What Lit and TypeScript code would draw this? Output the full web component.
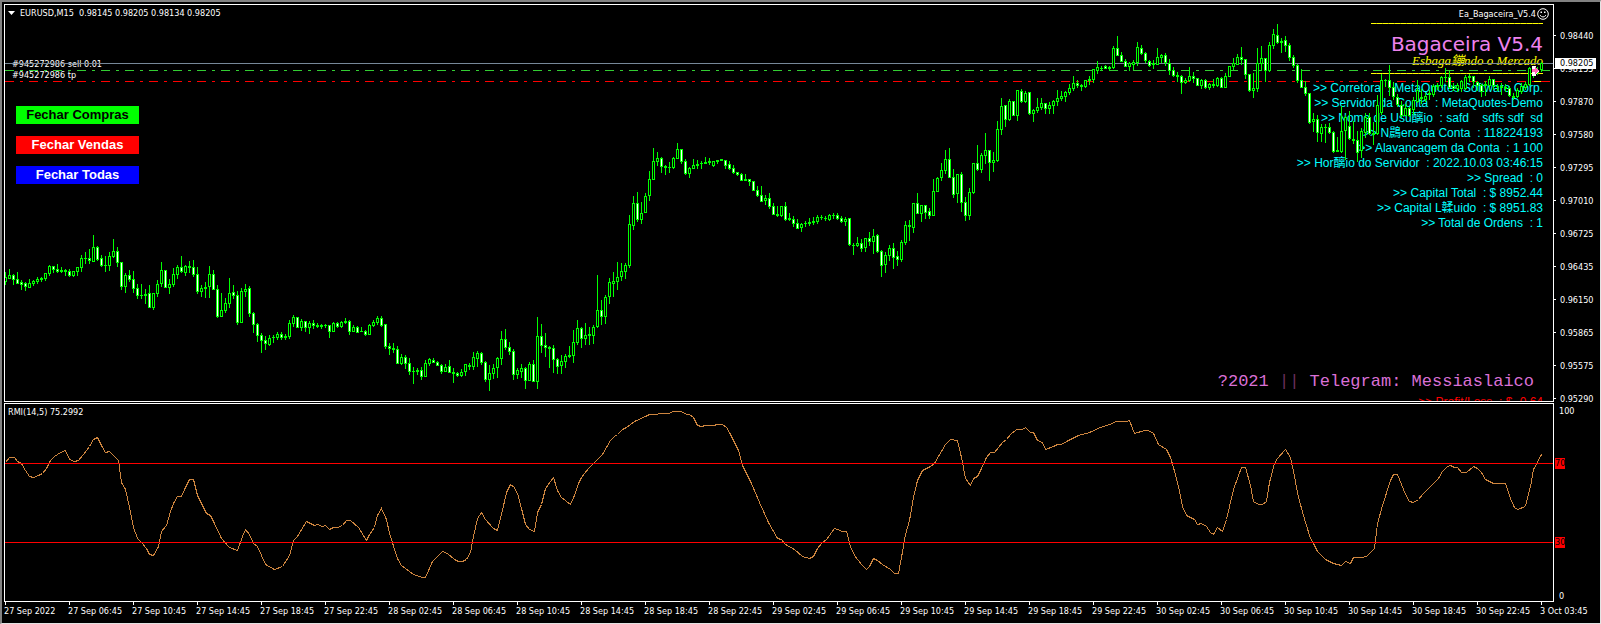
import { LitElement, html, svg, css } from "lit";
import { customElement } from "lit/decorators.js";

/**
 * Bars are listed as high, body top, body bottom, low, measured downwards from
 * the base row of their group in thirds of a row. "+" closes up, "-" closes down.
 */
interface BarGroup {
  base: number;
  bars: string;
}

const STEP = 4;
const FIRST_X = 5;

const GROUPS: BarGroup[] = [
  {
    base: 220,
    bars: `+156,171,186,195 +147,165,177,177 -162,165,180,195 -156,177,192,192 -180,186,195,210 -186,189,201,213
+177,189,203,203 +180,183,192,198 +171,177,186,192 +171,174,180,186 +159,159,177,183 +135,138,162,168
-138,138,150,159 -132,147,156,159 -141,150,156,159 +147,150,156,168 -147,153,168,171 +153,153,168,171
+141,141,156,168 +105,114,144,156 +96,114,117,132 -87,114,123,132 +45,81,126,126 -78,81,120,123
-105,114,138,141 +108,135,138,156 +96,108,138,153 +57,93,111,114 -81,93,129,141 -126,126,201,210
+159,165,201,219 -150,165,180,186 -153,177,207,219 -192,204,228,237 +192,225,228,237 +207,222,228,252
-195,219,264,264 +219,219,264,270 +180,192,222,231 +126,150,192,201 -150,150,204,204 +177,192,204,222
+144,162,195,201 +135,141,165,177 -108,141,156,159 +135,138,159,168 -123,138,144,159 -120,141,165,171
-141,162,216,222 +195,204,216,231 +186,201,207,234 +138,162,201,234 -150,162,210,210 -195,207,291,294
+219,270,291,291 +234,249,273,279 +174,219,252,264 -195,216,228,237 -213,225,309,315 +204,213,309,309
+192,207,216,231 -198,204,282,291 -276,279,315,339 -309,312,348,366 -339,345,363,399 -348,360,372,390
+345,354,375,378 +345,351,354,369 +336,342,354,360 -336,342,354,360 -342,348,354,360 +300,309,351,357
+285,291,312,321 -291,291,324,324 +297,303,324,333 -303,303,324,336 +303,309,324,342 -300,309,318,327
-309,315,321,324 +312,315,321,327 +312,315,318,324 -315,315,336,354 +306,309,336,336 -306,309,321,324
+303,306,321,324 +294,303,309,312 -300,303,336,345 +315,321,336,336 -318,321,339,339 +321,333,336,336
-330,333,345,348 +312,315,345,345 +300,306,318,321 +288,294,309,315 -288,294,318,321 -312,312,381,387
-369,378,387,405 -369,384,390,399`,
  },
  {
    base: 260,
    bars: `-258,267,312,312 +282,291,312,315 -285,291,312,327 -294,309,336,345 +321,333,336,372 +324,330,336,345
-321,330,351,360 +300,309,351,351 +294,297,312,318 -294,300,309,309 -303,306,318,318 -312,315,336,342
+312,321,336,336 -300,318,339,339 -324,336,342,369 -336,339,348,351 +327,336,348,351 +312,312,336,348
-309,315,321,330 +276,291,321,330 +273,279,297,321 -276,279,309,315 -303,306,360,366 +315,339,360,393
+312,324,342,357 +291,294,324,354 +213,237,297,315 -207,237,264,270 -246,261,276,285 -267,273,345,360
+324,330,345,357 +312,324,336,354 -321,324,363,387 +306,312,363,363 -300,312,366,366 +171,228,366,387
-192,228,258,279 -219,255,264,291 -258,261,267,324 -255,264,300,339 -294,297,321,342 +285,303,318,342
+282,288,306,324 -258,285,291,294 +210,246,288,309 +180,204,249,255 -201,204,237,264 +189,225,237,255
-201,222,228,255 +195,201,228,252 +45,150,201,204 -120,150,171,195 +105,111,171,192 +54,66,111,132
+36,63,72,111 +6,51,66,90 +9,33,51,63 +9,15,36,57`,
  },
  {
    base: 130,
    bars: `+255,282,408,414 +198,219,288,300 -186,219,270,276 +216,249,270,282 +189,198,249,249 +123,147,198,213
+54,93,150,150 +66,84,96,108 -81,84,111,129 -105,108,114,135 +96,111,114,129 +81,84,114,117
+39,57,87,87 -57,57,96,102 -87,93,132,135 +111,114,132,144 +87,105,117,117 -90,102,108,117
+93,99,102,117 -81,96,102,102 -84,93,99,105 +93,93,108,111 -90,90,96,102 -87,87,93,93
-90,90,108,117 -93,102,117,120 -105,114,129,132 -126,126,135,138 -129,132,153,153 -132,147,153,153
-147,147,156,168 -153,153,183,183 -168,180,198,201 -168,195,216,216 +195,204,213,225 -189,204,231,237
-219,228,255,255 -228,252,258,261 +228,228,258,261 -216,228,270,273 -249,264,270,273 -258,267,282,291
-267,279,297,297 +279,282,294,306 +273,279,282,291 +264,276,282,288 +261,273,279,285 +255,261,276,282
+255,261,264,270 -258,264,267,273 +252,255,270,273 +249,255,258,267 -249,255,267,270 -258,264,276,279
+261,267,276,288 -264,264,345,348 -339,345,348,375 +321,339,348,351 -327,339,357,366 +324,324,354,366
-306,324,336,348 +297,318,336,372 -312,315,366,369 -360,363,408,441 +366,375,405,429 +345,354,378,393
-339,354,384,417 -363,378,390,408 +330,336,390,396`,
  },
  {
    base: 30,
    bars: `+573,585,639,645 -570,585,591,633 +519,519,594,609 -489,519,552,552 +525,525,552,576 -525,525,549,567
-534,543,558,567 +447,483,558,558 +441,444,486,486 +399,420,444,453 +360,387,423,432 -354,387,444,444
-417,441,495,504 +432,432,492,519 -426,432,519,546 -501,516,558,573 +474,486,558,570 +399,399,489,492
-345,399,420,423 +369,375,420,429 +309,360,378,402 -360,360,399,453 +366,390,399,426 +273,297,393,396
+204,228,300,315 -225,225,270,291 +207,213,270,273 -213,213,258,258 +180,180,258,273 -177,183,216,219
+183,189,216,219 -186,186,252,255 +237,240,252,276 +204,231,243,249 +204,219,234,240 -219,219,237,252
+216,225,237,252 +210,213,228,252 +180,204,216,228 +183,198,207,213 +183,186,201,216 +162,174,189,195
+138,159,177,183 -150,159,168,174 -162,165,171,183 +150,150,171,174 +138,147,153,165 +117,117,150,159
+93,111,123,132 +108,114,117,123 -105,108,117,117 -108,111,117,123 +48,54,114,117 -18,54,78,78
-66,75,96,96 -87,93,111,111 +96,99,111,123 +90,96,105,120 +36,51,99,108 -45,54,72,75
-66,69,93,99 -90,93,108,111 -90,99,105,117 +54,81,105,105 +72,75,84,99 -69,75,99,108
-87,99,123,135 -111,120,138,141 -126,135,141,156 -135,138,159,192 +144,150,159,162 +111,138,153,156
-126,138,147,159 -144,144,168,168 +147,150,168,177 -147,150,174,177 +159,162,174,180 -147,162,168,174
+141,144,168,171 -141,144,174,174 +129,138,174,174 +108,108,141,141 +84,99,111,120 +72,81,105,105
-51,81,90,105 -87,87,135,147 -132,132,183,186 +129,174,183,204 +54,99,177,186 +48,84,102,123
-84,84,123,156 +36,45,123,126`,
  },
  {
    base: 10,
    bars: `+57,72,108,117 -42,75,99,102 -84,93,99,129 -78,90,108,126 -99,105,144,153 -135,141,168,174
-162,165,213,219 -177,210,234,234 -213,231,252,258 -249,249,339,342 +309,327,336,366`,
  },
  {
    base: 0,
    bars: `-345,357,399,426 +372,381,402,426 -372,381,384,429 -369,381,399,402 -393,396,456,459 -411,450,456,456
+318,393,456,459 +345,351,393,480 -333,378,417,420 -363,417,423,432 -393,420,459,486 +384,393,453,474
+339,351,399,414 -339,351,402,405 +366,399,405,435 +285,315,402,405 +222,240,339,345 +237,240,243,261
-195,240,264,288 -246,261,291,300 -282,291,315,321 -303,315,348,354 +312,324,348,348 -321,324,348,351
+291,300,330,345 +240,270,306,309 +267,291,297,312 +279,288,300,306 -270,279,285,300 +252,258,285,291
+249,255,261,270 +228,231,258,264 +204,231,234,246 -213,231,264,267 -249,258,267,273 +249,255,267,276
+240,243,267,276 +225,231,267,270 +222,228,234,246 -228,228,246,264 -243,246,258,273 -252,255,276,291
+243,252,258,288 +228,237,258,270 -237,237,258,270 -252,258,261,273 -249,258,264,285 +252,261,267,276
-258,264,288,291 -279,288,294,300 +264,270,291,294 +249,258,276,282 +246,252,264,270 +201,204,255,258
-201,204,222,234 +201,213,219,225 +186,189,210,216`,
  },
];

const RMI = `5,462 9,457 14,457 17,461 21,463 25,470 29,476 33,477 38,475 42,473 46,468 50,460 54,456 60,452 65,450
69,459 74,461 78,460 83,454 89,446 93,439 97,437 101,445 105,452 109,451 118,460 121,482 125,489 129,507 133,527
137,538 141,542 146,548 149,554 153,555 158,546 161,531 166,525 170,511 173,503 177,496 181,496 185,487 189,479
193,479 197,495 201,503 206,513 210,515 213,521 221,538 229,547 237,550 242,536 245,529 249,534 253,543 257,546
265,564 274,569 282,566 289,555 293,540 297,536 306,521 314,525 317,524 322,526 325,525 329,529 333,527 337,527
342,525 346,520 350,520 358,527 366,540 369,534 374,527 377,515 381,508 386,519 389,533 397,558 401,565 413,574
422,577 425,577 432,561 442,551 447,553 454,559 458,561 462,561 466,559 470,552 473,536 477,518 481,512 485,519
493,528 497,530 501,514 506,492 510,484 514,487 518,496 525,524 529,529 534,531 537,512 541,504 545,488 553,477
557,490 561,497 570,504 574,495 578,483 581,477 588,468 594,462 602,454 610,440 614,436 617,434 622,429 626,427
634,421 645,416 649,414 654,414 661,413 669,413 672,411 681,411 686,414 689,414 693,417 697,425 701,426 705,425
714,425 716,424 722,424 726,427 729,432 738,450 742,465 751,483 759,502 768,522 777,538 781,539 785,544 794,549
802,556 809,558 813,556 817,548 821,543 826,539 834,528 837,529 842,531 846,531 850,546 854,555 861,564 866,569
869,566 873,558 877,560 882,564 890,569 894,573 898,573 901,557 905,534 909,520 913,497 917,480 922,470 930,466
934,463 938,456 945,444 950,439 957,440 961,457 965,478 970,485 973,478 977,476 981,468 986,457 990,452 994,452
1002,442 1006,439 1010,434 1016,429 1022,429 1025,427 1030,432 1033,432 1037,440 1042,442 1045,449 1053,446
1057,444 1061,444 1068,440 1078,435 1089,432 1100,427 1109,424 1116,421 1126,421 1129,420 1134,433 1144,430
1148,430 1153,433 1158,444 1166,449 1170,457 1173,467 1178,486 1182,506 1186,515 1194,519 1197,524 1201,523
1206,526 1210,532 1213,534 1217,527 1222,531 1226,519 1233,489 1241,467 1245,467 1250,485 1253,501 1258,504
1262,504 1266,501 1269,482 1274,463 1277,458 1285,449 1290,457 1293,471 1298,497 1305,522 1310,538 1313,543
1317,551 1325,559 1333,563 1341,565 1345,561 1350,563 1353,557 1361,557 1366,556 1374,548 1377,523 1382,505
1390,480 1393,474 1397,474 1405,494 1409,501 1413,502 1418,499 1422,494 1426,490 1438,478 1442,471 1447,466
1450,465 1454,467 1457,467 1461,472 1466,472 1473,466 1477,468 1481,472 1485,479 1493,483 1505,483 1510,498
1514,507 1517,509 1525,506 1530,486 1533,469 1541,454`;

const PRICES = [
  "0.98440", "0.98155", "0.97870", "0.97580", "0.97295", "0.97010",
  "0.96725", "0.96435", "0.96150", "0.95865", "0.95575", "0.95290",
];

const TIMES = [
  "27 Sep 2022", "27 Sep 06:45", "27 Sep 10:45", "27 Sep 14:45", "27 Sep 18:45", "27 Sep 22:45",
  "28 Sep 02:45", "28 Sep 06:45", "28 Sep 10:45", "28 Sep 14:45", "28 Sep 18:45", "28 Sep 22:45",
  "29 Sep 02:45", "29 Sep 06:45", "29 Sep 10:45", "29 Sep 14:45", "29 Sep 18:45", "29 Sep 22:45",
  "30 Sep 02:45", "30 Sep 06:45", "30 Sep 10:45", "30 Sep 14:45", "30 Sep 18:45", "30 Sep 22:45",
  "3 Oct 03:45",
];

const INFO = [
  ">> Corretora  : MetaQuotes Software Corp.",
  ">> Servidor da Conta  : MetaQuotes-Demo",
  ">> Nome de Usu醨io  : safd    sdfs sdf  sd",
  ">> N鷐ero da Conta  : 118224193",
  ">> Alavancagem da Conta  : 1 100",
  ">> Hor醨io do Servidor  : 2022.10.03 03:46:15",
  ">> Spread  : 0",
  ">> Capital Total  : $ 8952.44",
  ">> Capital L韖uido  : $ 8951.83",
  ">> Total de Ordens  : 1",
];

@customElement("price-plot")
export class PricePlot extends LitElement {
  static styles = css`
    :host {
      display: block;
      min-height: 0;
      pointer-events: none;
    }
    svg {
      display: block;
      width: 100%;
      height: 100%;
    }
    .up {
      fill: #000;
    }
    .down {
      fill: #fff;
    }
    .lime {
      fill: #0f0;
    }
  `;

  private bars() {
    let x = FIRST_X;
    return GROUPS.flatMap(({ base, bars }) =>
      bars.split(/\s+/).map((bar) => {
        const [high, top, bottom, low] = bar
          .slice(1)
          .split(",")
          .map((v) => base + Math.round(Number(v) / 3));
        const at = x;
        x += STEP;
        const last = Math.max(low, bottom);
        const body = Math.max(1, bottom - top);
        return svg`
          <rect class="lime" x=${at} y=${high} width="1" height=${last - high} />
          <rect class="lime" x=${at - 1} y=${top} width="3" height=${body} />
          ${body > 2
            ? svg`<rect class=${bar[0] === "+" ? "up" : "down"} x=${at} y=${top + 1} width="1" height=${body - 2} />`
            : null}`;
      }),
    );
  }

  render() {
    return html`
      <svg viewBox="5 5 1548 396" preserveAspectRatio="none" shape-rendering="crispEdges" role="img" aria-label="EURUSD M15">
        <rect x="5" y="63" width="1548" height="1" fill="#778899" />
        <path d="M5 70.5H1550" stroke="#32cd32" stroke-dasharray="9 6 3 6" />
        <path d="M5 81.5H1550" stroke="#f00" stroke-dasharray="9 6 3 6" />
        ${this.bars()}
        <rect x="1534" y="81" width="7" height="1" fill="#ff0" />
        <path d="M1532 66h4v2h1v1h1v1h1v2h-1v1h-1v1h-1v2h-4z" fill="#fff" />
        <path d="M1532 69h3v-2h1v1h1v1h1v1h1v1h-1v1h-1v1h-1v1h-1v-2h-3z" fill="#ff69b4" />
      </svg>
    `;
  }
}

@customElement("rmi-plot")
export class RmiPlot extends LitElement {
  static styles = css`
    :host {
      display: block;
      min-height: 0;
    }
    svg {
      display: block;
      width: 100%;
      height: 100%;
    }
  `;

  render() {
    return html`
      <svg viewBox="5 404 1548 197" preserveAspectRatio="none" shape-rendering="crispEdges" role="img" aria-label="RMI">
        <polyline points=${RMI} transform="translate(0.5 0.5)" fill="none" stroke="#cd853f" />
        <rect x="5" y="463" width="1548" height="1" fill="#f00" />
        <rect x="5" y="542" width="1548" height="1" fill="#f00" />
      </svg>
    `;
  }
}

@customElement("app-root")
export class AppRoot extends LitElement {
  static styles = css`
    :host {
      display: flex;
      flex-direction: column;
      box-sizing: border-box;
      height: 100vh;
      min-height: 480px;
      padding: 2px 0 0 2px;
      border: 1px solid #e3e3e3;
      border-top: 2px solid #828282;
      border-left: 2px solid #828282;
      background: #000;
      color: #fff;
      font: 9px/12px "DejaVu Sans Condensed", "DejaVu Sans", sans-serif;
    }
    .row {
      display: grid;
      grid-template-columns: minmax(0, 1fr) 46px;
      grid-template-rows: minmax(0, 1fr);
      min-height: 0;
    }
    .price {
      flex: 2 1 0;
    }
    .rmi {
      flex: 1 1 0;
      margin-top: 1px;
    }
    .frame {
      display: grid;
      grid-template: minmax(0, 1fr) / minmax(0, 1fr);
      border: 1px solid #fff;
      overflow: hidden;
    }
    .frame > * {
      grid-area: 1 / 1;
    }
    .left {
      display: flex;
      flex-direction: column;
      align-items: flex-start;
      justify-self: start;
    }
    .symbol {
      display: flex;
      align-items: center;
      gap: 5px;
      height: 16px;
      padding-left: 3px;
      white-space: pre;
    }
    .orders {
      margin: 38px 0 25px;
      padding: 0 0 0 7px;
      line-height: 11px;
      list-style: none;
    }
    .actions {
      display: flex;
      flex-direction: column;
      gap: 12px;
      padding-left: 11px;
    }
    button {
      width: 123px;
      height: 18px;
      padding: 0;
      border: 0;
      color: #fff;
      font: bold 13px/18px "Liberation Sans", Arial, sans-serif;
    }
    .buy {
      background: #0f0;
      color: #000;
    }
    .sell {
      background: #f00;
    }
    .all {
      background: #00f;
    }
    .right {
      display: flex;
      flex-direction: column;
      align-items: flex-end;
      min-height: 0;
      padding: 1px 10px 0 0;
      overflow: hidden;
      white-space: pre;
    }
    .expert {
      display: flex;
      align-items: center;
      gap: 1px;
      height: 16px;
      margin-right: -6px;
    }
    .rule {
      flex: none;
      width: 172px;
      height: 1px;
      margin: 1px 0 0;
      border: 0;
      background: repeating-linear-gradient(90deg, #ff0 0 5px, #cc0 5px 6px);
    }
    h1 {
      margin: 8px 0 0;
      color: #ee82ee;
      font: 20px/24px "DejaVu Sans", Verdana, sans-serif;
    }
    .motto {
      height: 16px;
      margin: -3px 0 3px;
      color: #ff0;
      font: italic 13px/16px "Liberation Serif", "Noto Sans CJK SC", serif;
    }
    .info {
      margin: 7px 0 0;
      padding: 0;
      color: #0ff;
      font: 12px/15px "Liberation Sans", "Noto Sans CJK SC", sans-serif;
      list-style: none;
    }
    .info li {
      height: 15px;
      text-align: right;
    }
    .contact {
      margin: auto 9px 0 0;
      color: #da70d6;
      font: 17px/24px "Liberation Mono", monospace;
    }
    .bars {
      color: #6b2f5c;
    }
    .profit {
      flex: none;
      margin: 1px 0 -9px;
      color: #f00;
      font: 12px/15px "Liberation Sans", Arial, sans-serif;
    }
    .prices {
      margin: 0;
      padding: 15px 0 0;
      list-style: none;
    }
    .prices li {
      position: relative;
      display: flex;
      align-items: center;
      gap: 4px;
      height: 33px;
    }
    .prices li::before {
      content: "";
      width: 2px;
      height: 1px;
      background: #fff;
    }
    .current {
      position: absolute;
      top: 6px;
      left: 1px;
      width: 41px;
      padding-left: 5px;
      box-sizing: border-box;
      background: #fff;
      color: #000;
      line-height: 11px;
    }
    .levels {
      display: grid;
      grid-template-rows: 53fr 79fr 53fr 12px;
      justify-items: start;
      padding: 2px 0 0 1px;
    }
    .levels span {
      padding-left: 4px;
    }
    .levels .level {
      padding: 0;
      height: 11px;
      line-height: 11px;
      background: #f00;
      color: #000;
    }
    .times {
      display: grid;
      grid-template-columns: repeat(24, minmax(0, 64fr)) minmax(0, 12fr);
      flex: none;
      height: 21px;
      margin: 0 47px 0 1px;
      padding: 0;
      list-style: none;
      white-space: nowrap;
    }
    .times li::before {
      content: "";
      display: block;
      width: 1px;
      height: 3px;
      background: #fff;
    }
    .times span {
      display: block;
      margin-left: -1px;
    }
  `;

  render() {
    return html`
      <section class="row price">
        <div class="frame">
          <div class="left">
            <div class="symbol">
              <svg width="7" height="4" viewBox="0 0 7 4" aria-hidden="true"><path d="M0 0h7L3.5 4z" fill="#fff" /></svg>
              <span>EURUSD,M15  0.98145 0.98205 0.98134 0.98205</span>
            </div>
            <ul class="orders">
              <li>#945272986 sell 0.01</li>
              <li>#945272986 tp</li>
            </ul>
            <div class="actions">
              <button class="buy" type="button">Fechar Compras</button>
              <button class="sell" type="button">Fechar Vendas</button>
              <button class="all" type="button">Fechar Todas</button>
            </div>
          </div>
          <div class="right">
            <div class="expert"><span>Ea_Bagaceira_V5.4</span><svg width="12" height="12" viewBox="0 0 12 12" fill="none" stroke="#fff" aria-hidden="true"><circle cx="6" cy="6" r="5.3" /><path d="M3 7.2Q6 10.8 9 7.2" /><path d="M3.5 4.3h1.5M7 4.3h1.5" stroke-width="1.4" /></svg></div>
            <hr class="rule" />
            <h1>Bagaceira V5.4</h1>
            <div class="motto">Esbaga鏰ndo o Mercado</div>
            <hr class="rule" />
            <ul class="info">${INFO.map((line) => html`<li>${line}</li>`)}</ul>
            <div class="contact">?2021 <span class="bars">||</span> Telegram: Messiaslaico</div>
            <div class="profit">>> Profit/Loss  : $ -0.64</div>
          </div>
          <price-plot></price-plot>
        </div>
        <ul class="prices">
          ${PRICES.map(
            (price, i) => html`<li>${price}${i === 1 ? html`<span class="current">0.98205</span>` : null}</li>`,
          )}
        </ul>
      </section>
      <section class="row rmi">
        <div class="frame">
          <div class="left"><div class="symbol">RMI(14,5) 75.2992</div></div>
          <rmi-plot></rmi-plot>
        </div>
        <div class="levels">
          <span>100</span><span class="level">70</span><span class="level">30</span><span>0</span>
        </div>
      </section>
      <ol class="times">
        ${TIMES.map((time) => html`<li><span>${time}</span></li>`)}
      </ol>
    `;
  }
}
